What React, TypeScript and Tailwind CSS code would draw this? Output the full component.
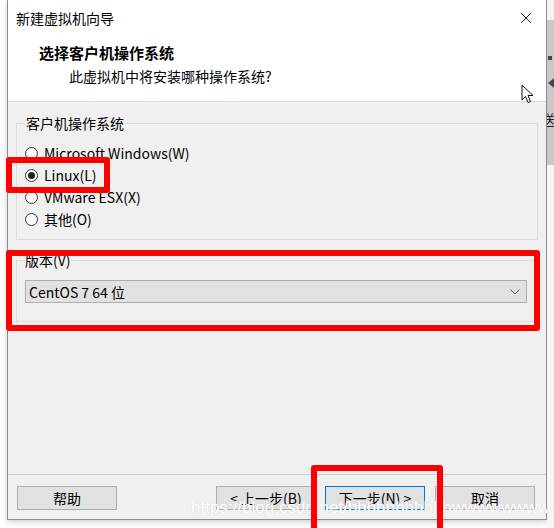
const font = { fontFamily: '"Noto Sans CJK SC", "Noto Sans", sans-serif' }

const Radio = ({ label, checked }: { label: string; checked?: boolean }) => {
  return (
    <div className="flex items-center h-[22px]">
      <span className="w-[13px] h-[13px] rounded-full border border-[#333] bg-white flex items-center justify-center">
        {checked && <span className="w-[7px] h-[7px] rounded-full bg-[#222]"></span>}
      </span>
      <span className="ml-[6px] text-[14px] leading-[18px] text-black">{label}</span>
    </div>
  )
}

const Btn = ({ label, primary, className }: { label: string; primary?: boolean; className?: string }) => {
  return (
    <div
      className={
        "w-[100px] h-[24px] flex items-center justify-center text-[14px] bg-[#e1e1e1] border " +
        (primary ? "border-[#0078d7] " : "border-[#adadad] ") +
        (className || "")
      }
    >
      {label}
    </div>
  )
}

const App = () => {
  return (
    <div className="relative w-[554px] h-[528px] bg-white overflow-hidden text-black" style={font}>
      <div className="flex h-full">
        {/* dialog */}
        <div className="ml-[7px] w-[540px] h-[520px] border-l border-r border-b border-[#8c8c8c] bg-[#f0f0f0] flex flex-col shadow-[0_2px_6px_rgba(0,0,0,0.2)]">
          <div className="h-[35px] bg-white flex items-center justify-between pl-[8px] pr-[14px]">
            <span className="text-[14px] leading-[18px]">新建虚拟机向导</span>
            <svg width="12" height="12" viewBox="0 0 12 12">
              <path d="M1 1 L11 11 M11 1 L1 11" stroke="#222" strokeWidth="1" />
            </svg>
          </div>
          <div className="h-[67px] bg-white border-b border-[#dcdcdc] pt-[8px]">
            <div className="pl-[31px] text-[15px] leading-[20px] font-bold">选择客户机操作系统</div>
            <div className="pl-[61px] mt-[3px] text-[14px] leading-[20px]">此虚拟机中将安装哪种操作系统?</div>
          </div>

          <fieldset className="mx-[8px] mt-[12px] border border-[#dcdcdc] px-[8px] pb-[9px]">
            <legend className="px-[1px] text-[14px] leading-[18px]">客户机操作系统</legend>
            <div className="pt-[10px] flex flex-col">
              <Radio label="Microsoft Windows(W)" />
              <Radio label="Linux(L)" checked />
              <Radio label="VMware ESX(X)" />
              <Radio label="其他(O)" />
            </div>
          </fieldset>

          <fieldset className="mx-[8px] mt-[11px] border border-[#dcdcdc] pl-[8px] pr-[10px] pb-[18px]">
            <legend className="px-[0px] text-[14px] leading-[18px]">版本(V)</legend>
            <div className="mt-[11px] h-[23px] bg-[#e1e1e1] border border-[#adadad] flex items-center justify-between pl-[3px] pr-[6px]">
              <span className="text-[14px] leading-[18px]">CentOS 7 64 位</span>
              <svg width="10" height="6" viewBox="0 0 10 6">
                <path d="M0.5 0.5 L5 5 L9.5 0.5" stroke="#555" strokeWidth="1" fill="none" />
              </svg>
            </div>
          </fieldset>

          <div className="flex-1"></div>

          <div className="border-t border-[#d0d0d0] h-[45px] pt-[11px] flex">
            <Btn label="帮助" className="ml-[9px]" />
            <Btn label="< 上一步(B)" className="ml-[99px]" />
            <Btn label="下一步(N) >" primary className="ml-[9px]" />
            <Btn label="取消" className="ml-[10px]" />
          </div>
        </div>

        {/* window behind, right edge */}
        <div className="flex-1 h-full flex flex-col overflow-hidden">
          <div className="h-[20px] bg-[#f4f4f4]"></div>
          <div className="h-[145px] bg-[#c9c9c9] flex flex-col items-start pl-[1px]">
            <div className="mt-[36px] w-[4px] h-[4px] bg-[#3a4a5a]"></div>
            <div className="mt-[18px] w-0 h-0 border-y-[5px] border-y-transparent border-r-[6px] border-r-[#3a4a5a]"></div>
            <div className="mt-[22px] -ml-[7px] text-[14px] leading-[18px] text-[#222]">送</div>
          </div>
          <div className="flex-1 bg-[#f6f6f6]"></div>
        </div>
      </div>

      {/* watermark */}
      <div className="absolute left-[191px] top-[498px] text-[17px] leading-[20px] text-white whitespace-nowrap [text-shadow:0_0_1px_#c8c8c8]" style={{ fontFamily: '"Liberation Sans", sans-serif' }}>
        https://blog.csdn.net/hhhhhhhhhhhwwwwwwwwww
      </div>

      {/* cursor */}
      <svg className="absolute left-[521px] top-[84px]" width="14" height="21" viewBox="0 0 14 21">
        <path d="M1 1 L1 16 L4.5 12.5 L7 18.5 L9.5 17.5 L7 11.5 L12 11.5 Z" fill="white" stroke="#111" strokeWidth="1" strokeLinejoin="round" />
      </svg>

      {/* red annotations */}
      <div className="absolute left-[6px] top-[157px] w-[104px] h-[36px] border-[6px] border-[#ff0000] rounded-[3px]"></div>
      <div className="absolute left-[6px] top-[250px] w-[534px] h-[81px] border-[6px] border-[#ff0000] rounded-[3px]"></div>
      <div className="absolute left-[311px] top-[465px] w-[132px] h-[72px] border-[6px] border-[#ff0000] rounded-[3px]"></div>
    </div>
  )
}

export default App
